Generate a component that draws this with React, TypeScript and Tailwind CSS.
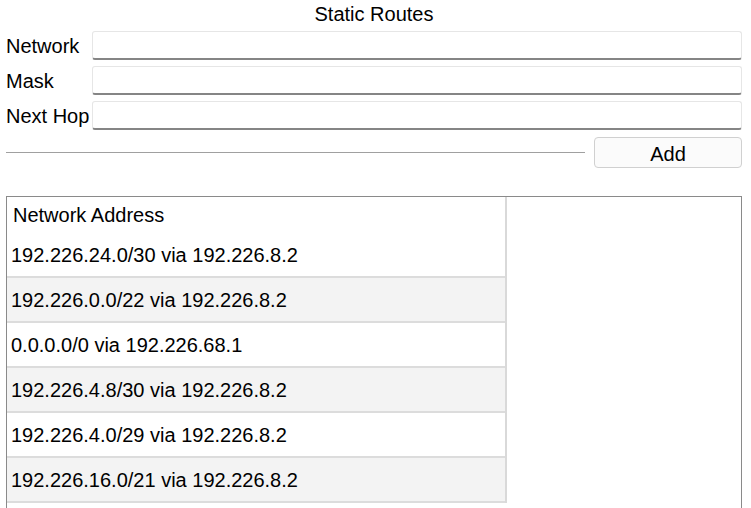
const routes = [
  "192.226.24.0/30 via 192.226.8.2",
  "192.226.0.0/22 via 192.226.8.2",
  "0.0.0.0/0 via 192.226.68.1",
  "192.226.4.8/30 via 192.226.8.2",
  "192.226.4.0/29 via 192.226.8.2",
  "192.226.16.0/21 via 192.226.8.2",
];

function Field({ label }: { label: string }) {
  return (
    <div className="flex items-center h-[29px]">
      <label className="w-[86px] shrink-0 leading-none">{label}</label>
      <input
        type="text"
        className="flex-1 h-[29px] bg-white border border-[#e6e6e6] border-b-2 border-b-[#858585] rounded-[3px] outline-none px-2"
      />
    </div>
  );
}

export default function App() {
  return (
    <div
      className="w-[751px] h-[508px] overflow-hidden bg-white text-black text-[20px] pl-[6px] pr-[9px]"
      style={{ fontFamily: '"Liberation Sans", Arial, sans-serif' }}
    >
      <h1 className="h-[31px] flex items-center justify-center leading-none pb-[3px]">
        Static Routes
      </h1>

      <div className="flex flex-col gap-[6px]">
        <Field label="Network" />
        <Field label="Mask" />
        <Field label="Next Hop" />
      </div>

      <div className="flex items-center mt-[7px] h-[31px]">
        <div className="flex-1 h-px bg-[#a0a0a0]" />
        <button className="ml-[9px] w-[148px] h-[31px] pt-[2px] bg-[#fbfbfb] border border-[#d0d0d0] rounded-[4px] leading-none">
          Add
        </button>
      </div>

      <div className="mt-[28px] border-l border-t border-r border-[#8a8a8a] h-[400px]">
        <div className="w-[500px] border-r-2 border-[#d9d9d9]">
          <div className="h-[36px] flex items-center pl-[6px]">
            Network Address
          </div>
          {routes.map((r, i) => (
            <div
              key={r}
              className={`h-[45px] flex items-center pl-[4px] pt-[1px] border-b-2 border-[#dcdcdc] ${
                i % 2 === 1 ? "bg-[#f3f3f3]" : "bg-white"
              }`}
            >
              {r}
            </div>
          ))}
        </div>
      </div>
    </div>
  );
}
